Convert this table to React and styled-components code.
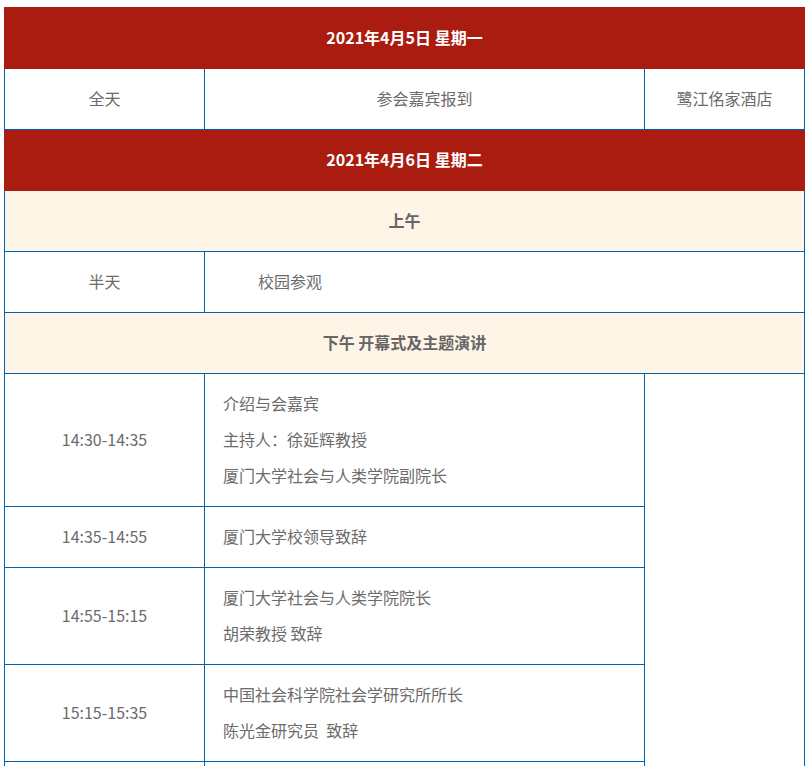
import styled, { createGlobalStyle } from "styled-components";

/* ------------------ STYLES ------------------ */

const GlobalStyle = createGlobalStyle`
  body {
    margin: 0;
    background: #fff;
    font-family: "Noto Sans CJK SC", "Noto Sans", sans-serif;
  }
`;

const Page = styled.div`
  padding: 7px 4px 0 4px;
  overflow: hidden;
  height: 766px;
  box-sizing: border-box;
`;

const Table = styled.table`
  width: 800px;
  border-collapse: collapse;
  table-layout: fixed;
  font-size: 16px;
  line-height: 36px;
  color: #6b6b6b;
`;

const Cell = styled.td`
  border: 1px solid #0063b1;
  padding: 11px 18px 13px;
  text-align: ${({ align }) => align || "center"};
  vertical-align: middle;
  background: #fff;
`;

const IndentCell = styled(Cell)`
  text-align: left;
  padding-left: 21px;
  text-indent: 2em;
`;

const FillerCell = styled.td`
  border: 1px solid #0063b1;
  height: 60px;
  padding: 0;
`;

const DayCell = styled.td`
  background: #ab1c10;
  border: 1px solid #ab1c10;
  color: #fff;
  font-weight: 700;
  text-align: center;
  padding: 11px 18px 13px;
`;

const SectionCell = styled.td`
  background: #fef5e7;
  border: 1px solid #0063b1;
  color: #666;
  font-weight: 700;
  text-align: center;
  padding: 11px 18px 13px;
`;

const Line = styled.div`
  white-space: pre;
`;

/* ------------------ DATA ------------------ */

const talks = [
  {
    time: "14:30-14:35",
    lines: ["介绍与会嘉宾", "主持人：徐延辉教授", "厦门大学社会与人类学院副院长"],
  },
  { time: "14:35-14:55", lines: ["厦门大学校领导致辞"] },
  { time: "14:55-15:15", lines: ["厦门大学社会与人类学院院长", "胡荣教授 致辞"] },
  { time: "15:15-15:35", lines: ["中国社会科学院社会学研究所所长", "陈光金研究员  致辞"] },
];

/* ------------------ COMPONENT ------------------ */

export default function App() {
  return (
    <>
      <GlobalStyle />
      <Page>
        <Table>
          <colgroup>
            <col style={{ width: 200 }} />
            <col style={{ width: 440 }} />
            <col style={{ width: 160 }} />
          </colgroup>
          <tbody>
            <tr>
              <DayCell colSpan={3}>2021年4月5日 星期一</DayCell>
            </tr>
            <tr>
              <Cell>全天</Cell>
              <Cell>参会嘉宾报到</Cell>
              <Cell>鹭江佲家酒店</Cell>
            </tr>
            <tr>
              <DayCell colSpan={3}>2021年4月6日 星期二</DayCell>
            </tr>
            <tr>
              <SectionCell colSpan={3}>上午</SectionCell>
            </tr>
            <tr>
              <Cell>半天</Cell>
              <IndentCell colSpan={2}>校园参观</IndentCell>
            </tr>
            <tr>
              <SectionCell colSpan={3}>下午 开幕式及主题演讲</SectionCell>
            </tr>
            {talks.map((t, i) => (
              <tr key={t.time}>
                <Cell>{t.time}</Cell>
                <Cell align="left">
                  {t.lines.map((l) => (
                    <Line key={l}>{l}</Line>
                  ))}
                </Cell>
                {i === 0 && <Cell rowSpan={talks.length + 1} />}
              </tr>
            ))}
            <tr>
              <FillerCell />
              <FillerCell />
            </tr>
          </tbody>
        </Table>
      </Page>
    </>
  );
}
